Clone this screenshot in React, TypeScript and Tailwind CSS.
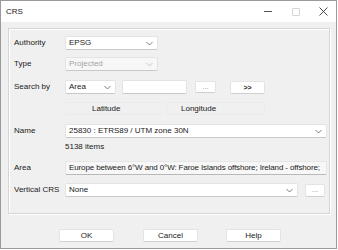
import React from "react";

const Chevron = ({ color = "#606060" }: { color?: string }) => (
  <svg width="7" height="5" viewBox="0 0 7 5" className="shrink-0">
    <path d="M0.5 1 L3.5 4 L6.5 1" fill="none" stroke={color} strokeWidth="0.9" />
  </svg>
);

const Combo = ({
  text,
  w,
  disabled = false,
}: {
  text: string;
  w: string;
  disabled?: boolean;
}) => (
  <div
    className={`${w} h-[14px] flex items-center justify-between pl-[3px] pr-[4px] border border-[#e3e3e3] border-b-[#c8c8c8] rounded-[2px] ${
      disabled ? "bg-[#f7f7f7] text-[#a3a3a3]" : "bg-white text-[#1a1a1a]"
    }`}
  >
    <span className="leading-none">{text}</span>
    <Chevron color={disabled ? "#c0c0c0" : "#707070"} />
  </div>
);

const Btn = ({ children, cls = "" }: { children: React.ReactNode; cls?: string }) => (
  <div
    className={`flex items-center justify-center bg-white border border-[#e3e3e3] border-b-[#cfcfcf] rounded-[2px] text-[#1a1a1a] leading-none ${cls}`}
  >
    {children}
  </div>
);

export default function App() {
  return (
    <div
      className="w-[338px] h-[250px] bg-white text-[8px] text-[#1a1a1a]"
      style={{ fontFamily: '"Liberation Sans", Arial, sans-serif' }}
    >
      <div className="w-[337px] h-[249px] border border-[#9a9a9a] bg-[#f0f0f0] flex flex-col">
        {/* title bar */}
        <div className="h-[21px] bg-white flex items-center pl-[5px] shrink-0">
          <span className="leading-none">CRS</span>
          <div className="ml-auto flex items-center h-full">
            <div className="w-[28px] flex justify-center">
              <div className="w-[8px] h-[1px] bg-[#555]" />
            </div>
            <div className="w-[28px] flex justify-center">
              <div className="w-[8px] h-[8px] border border-[#d5d5d5] rounded-[1px]" />
            </div>
            <div className="w-[26px] flex justify-center">
              <svg width="9" height="9" viewBox="0 0 9 9">
                <path d="M0.5 0.5 L8.5 8.5 M8.5 0.5 L0.5 8.5" stroke="#333" strokeWidth="0.9" />
              </svg>
            </div>
          </div>
        </div>

        {/* body */}
        <div className="flex-1 flex flex-col pl-[7px] pt-[6px]">
          <div className="w-[322px] h-[186px] border border-[#d5d5d5] shadow-[inset_1px_1px_0_#fff,1px_1px_0_#fff] flex flex-col pl-[5px] pt-[7px]">
            {/* Authority */}
            <div className="flex items-center h-[14px]">
              <div className="w-[51px]">Authority</div>
              <Combo text="EPSG" w="w-[93px]" />
            </div>
            {/* Type */}
            <div className="flex items-center h-[14px] mt-[7px]">
              <div className="w-[51px]">Type</div>
              <Combo text="Projected" w="w-[93px]" disabled />
            </div>
            {/* Search by */}
            <div className="flex items-center h-[14px] mt-[9px]">
              <div className="w-[51px]">Search by</div>
              <Combo text="Area" w="w-[51px]" />
              <div className="ml-[6px] w-[65px] h-[14px] bg-white border border-[#e3e3e3] border-b-[#c8c8c8] rounded-[2px]" />
              <Btn cls="ml-[8px] w-[21px] h-[12px] text-[#9a9a9a]">...</Btn>
              <Btn cls="ml-[14px] w-[35px] h-[13px] border-[#6f9fd3] border-b-[#6f9fd3] font-bold text-[7px]">
                &gt;&gt;
              </Btn>
            </div>
            {/* Lat / Long */}
            <div className="flex items-center h-[13px] mt-[8px] pl-[51px]">
              <div className="w-[96px] h-[13px] flex items-center pl-[27px] border-y border-[#ebebeb]">
                Latitude
              </div>
              <div className="ml-[5px] w-[99px] h-[13px] flex items-center pl-[14px] border border-[#ebebeb]">
                Longitude
              </div>
            </div>
            {/* Name */}
            <div className="flex items-center h-[14px] mt-[9px]">
              <div className="w-[51px]">Name</div>
              <Combo text="25830 : ETRS89 / UTM zone 30N" w="w-[262px]" />
            </div>
            {/* items */}
            <div className="flex items-center h-[12px] mt-[3px] pl-[51px]">5138 items</div>
            {/* Area */}
            <div className="flex items-center h-[14px] mt-[8px]">
              <div className="w-[51px]">Area</div>
              <div className="w-[262px] h-[14px] flex items-center pl-[3px] bg-[#f7f7f7] border border-[#e6e6e6] border-b-[#b8b8b8] rounded-[2px] overflow-hidden whitespace-nowrap tracking-[-0.12px]">
                Europe between 6°W and 0°W: Faroe Islands offshore; Ireland - offshore;
              </div>
            </div>
            {/* Vertical CRS */}
            <div className="flex items-center h-[14px] mt-[8px]">
              <div className="w-[51px]">Vertical CRS</div>
              <Combo text="None" w="w-[233px]" />
              <Btn cls="ml-[7px] w-[20px] h-[13px] text-[#9a9a9a]">...</Btn>
            </div>
          </div>

          {/* buttons */}
          <div className="flex items-center mt-[15px] pl-[51px]">
            <Btn cls="w-[55px] h-[13px]">OK</Btn>
            <Btn cls="ml-[29px] w-[55px] h-[13px]">Cancel</Btn>
            <Btn cls="ml-[28px] w-[55px] h-[13px]">Help</Btn>
          </div>
        </div>
      </div>
    </div>
  );
}
